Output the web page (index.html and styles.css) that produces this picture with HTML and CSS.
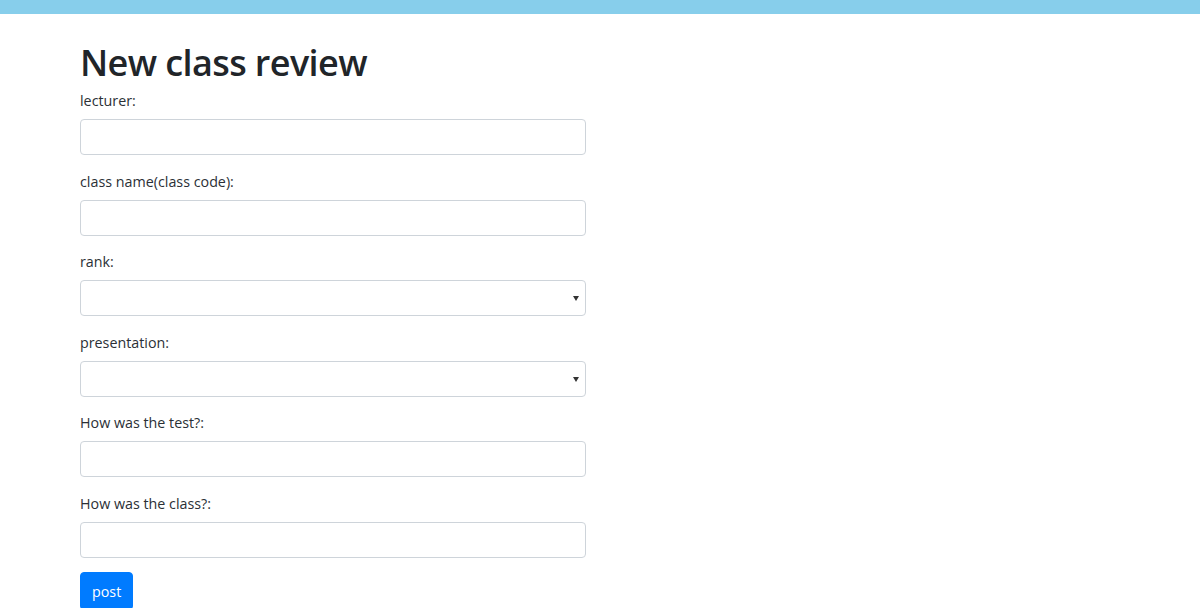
FILE: index.html
```html
<!DOCTYPE html>
<html lang="en">
<head>
<meta charset="utf-8">
<title>New class review</title>
<link rel="stylesheet" href="styles.css">
</head>
<body>
<div class="topbar"></div>
<main class="container">
  <h1 class="title">New class review</h1>
  <form class="review-form">
    <div class="form-group">
      <label class="label">lecturer:</label>
      <input class="form-control" type="text">
    </div>
    <div class="form-group">
      <label class="label">class name(class code):</label>
      <input class="form-control" type="text">
    </div>
    <div class="form-group">
      <label class="label">rank:</label>
      <div class="select-wrap"><select class="form-control select"><option></option></select></div>
    </div>
    <div class="form-group">
      <label class="label">presentation:</label>
      <div class="select-wrap"><select class="form-control select"><option></option></select></div>
    </div>
    <div class="form-group">
      <label class="label">How was the test?:</label>
      <input class="form-control" type="text">
    </div>
    <div class="form-group">
      <label class="label">How was the class?:</label>
      <input class="form-control" type="text">
    </div>
    <button class="btn-primary" type="button">post</button>
  </form>
</main>
</body>
</html>
```
FILE: styles.css
```css
* { box-sizing: border-box; }
html, body { margin: 0; padding: 0; }
body {
  font-family: "Open Sans", "Noto Sans", sans-serif;
  font-size: 14.3px;
  color: #212529;
  background: #fff;
}
.topbar {
  height: 14px;
  background: #87ceeb;
}
.container {
  padding: 0 0 0 80px;
}
.title {
  margin: 22px 0 0;
  font-size: 36px;
  font-weight: 600;
  line-height: 53px;
  letter-spacing: -0.6px;
}
.review-form {
  width: 506px;
  display: flex;
  flex-direction: column;
}
.form-group {
  display: flex;
  flex-direction: column;
  margin-bottom: 14.5px;
}
.label {
  line-height: 24px;
  margin-bottom: 6px;
  color: #2b3036;
}
.form-control {
  display: block;
  width: 100%;
  height: 36px;
  padding: 6px 12px;
  font: inherit;
  color: #495057;
  background: #fff;
  border: 1px solid #ced4da;
  border-radius: 4px;
  outline: none;
}
.select-wrap {
  position: relative;
}
.select {
  appearance: none;
  -webkit-appearance: none;
}
.select-wrap::after {
  content: "";
  position: absolute;
  right: 7px;
  top: 16px;
  border-left: 3px solid transparent;
  border-right: 3px solid transparent;
  border-top: 5px solid #333;
  pointer-events: none;
}
.btn-primary {
  align-self: flex-start;
  height: 38px;
  padding: 6px 11px;
  font: inherit;
  color: #fff;
  background: #007bff;
  border: 1px solid #007bff;
  border-radius: 4px;
  margin-top: 0;
}
```
